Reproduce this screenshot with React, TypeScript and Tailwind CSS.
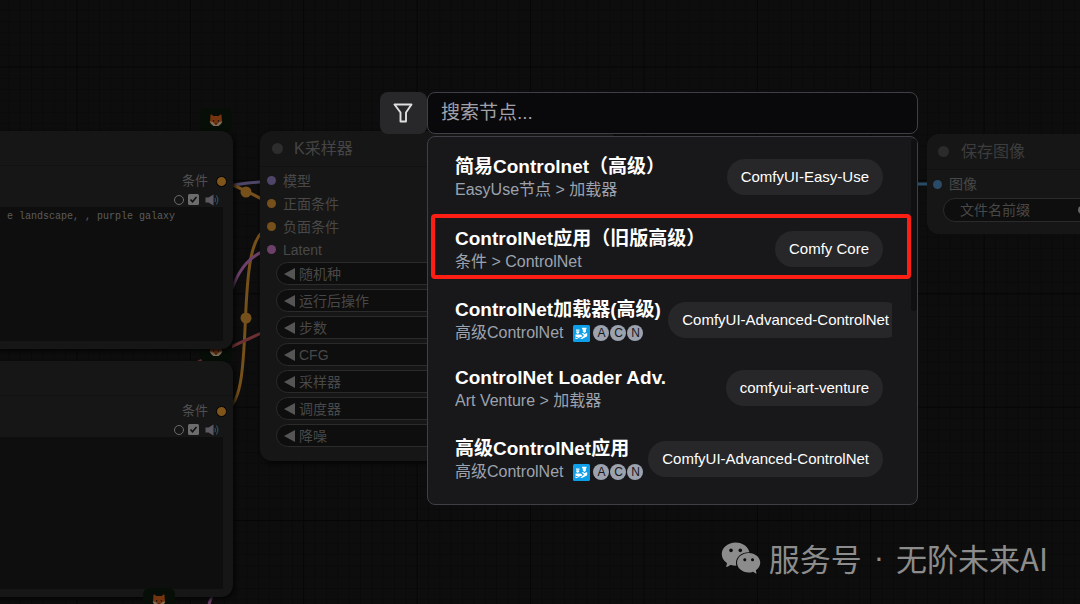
import type { ReactNode } from 'react';
import { AiFillWechat } from 'react-icons/ai';

function Fox({ className }: { className: string }) {
  return (
    <div className={`absolute flex h-6 w-8 items-start justify-center rounded-md bg-[#060e07] pt-1.5 ${className}`}>
      <svg width="14" height="13" viewBox="0 0 14 13" aria-hidden="true">
        <path d="M1.500.8Q2.500 0 4.200 2H9.800Q11.500 0 12.500.8L13 8 7 12 1 8Z" fill="#73340f" />
        <path d="M.6 7.500Q4 7 5.500 10L7 11l1.500-1Q10 7 13.400 7.500 12 11 9.500 12H4.500Q2 11 .6 7.500Z" fill="#7d6f5c" />
        <path d="M4 6h1.200v1.500H4zM8.800 6H10v1.500H8.800zM6 9.500h2L7 11z" fill="#1c1410" />
      </svg>
    </div>
  );
}

function Speaker() {
  return (
    <svg width="14" height="12" viewBox="0 0 14 12" aria-hidden="true">
      <path d="M.5 3.500h3L8.500.5v11L3.500 8.500h-3z" fill="#5c5862" />
      <path d="M9.800 4q1.300 2 0 4M11.300 1.500q3 4.500 0 9" fill="none" stroke="#234a66" strokeWidth="1.300" />
    </svg>
  );
}

function PromptNode({ text, label, className, boxClass }: { text: string; label: string; className: string; boxClass: string }) {
  return (
    <section className={`absolute -left-6 flex w-[257px] flex-col rounded-xl bg-[#161616] pb-2 shadow-[2px_2px_4px_#050505] ${className}`}>
      <div className="h-[35px] border-b border-[#111111]" />
      <div className="flex h-7 items-center justify-end gap-2 pr-1.5 pt-0.5 text-[13px] text-[#505050]">
        条件
        <span className="size-[11px] rounded-full border border-black bg-[#7f551a]" />
      </div>
      <div className="flex h-[13px] items-center justify-end gap-1 pb-0.5 pr-3.5">
        <span className="size-2.5 rounded-full border border-[#6a6a6a]" />
        <svg width="11" height="11" viewBox="0 0 11 11" className="mr-0.5" aria-hidden="true">
          <rect width="11" height="11" rx="1.500" fill="#6c6c6c" />
          <path d="m2.500 5.500 2 2.200 4-4.700" fill="none" stroke="#111" strokeWidth="1.600" />
        </svg>
        <Speaker />
      </div>
      <textarea
        aria-label={label}
        readOnly
        value={text}
        className={`mr-2.5 resize-none overflow-hidden bg-[#0e0e0e] py-0.5 text-right font-[Liberation_Mono,monospace] text-[10px] leading-4 text-[#5c5c5c] outline-none ${boxClass}`}
      />
    </section>
  );
}

const inputs = [
  { name: '模型', dot: 'bg-[#4e4568]' },
  { name: '正面条件', dot: 'bg-[#76501a]' },
  { name: '负面条件', dot: 'bg-[#76501a]' },
  { name: 'Latent', dot: 'bg-[#6d406a]' },
];
const params = ['随机种', '运行后操作', '步数', 'CFG', '采样器', '调度器', '降噪'];

function Sampler() {
  return (
    <section className="absolute left-[260px] top-[131px] w-[357px] rounded-xl bg-[#161616] pb-3.5 text-sm text-[#484848] shadow-[2px_2px_4px_#050505]">
      <header className="flex h-9 items-center gap-[11px] border-b border-[#111111] pl-3 text-base text-[#454545]">
        <span className="size-[11px] rounded-full bg-[#2d2d2d]" />K采样器
      </header>
      <ul className="pt-0.5">
        {inputs.map((i) => (
          <li key={i.name} className="flex h-[23px] items-center gap-[7px] pl-[7px]">
            <span className={`size-[9px] rounded-full ${i.dot}`} />
            {i.name}
          </li>
        ))}
      </ul>
      <div className="mx-4 flex flex-col gap-1 pt-px">
        {params.map((p) => (
          <button key={p} className="flex h-[23px] items-center gap-1 rounded-full border border-[#2b2b2b] bg-[#0e0e0e] pl-1.5">
            <svg width="12" height="12" viewBox="0 0 12 12" aria-hidden="true">
              <path d="M12 0v12L1 6z" fill="#555" />
            </svg>
            {p}
          </button>
        ))}
      </div>
    </section>
  );
}

function SaveNode() {
  return (
    <section className="absolute left-[927px] top-[134px] w-52 rounded-xl bg-[#161616] pb-3 text-sm text-[#484848]">
      <header className="flex h-9 items-center gap-3 border-b border-[#111111] pl-[11px] text-base text-[#3d3d3d]">
        <span className="size-[11px] rounded-full bg-[#2b2b2b]" />保存图像
      </header>
      <div className="flex h-7 items-center gap-[7px] pl-1.5">
        <span className="size-[9px] rounded-full bg-[#294b67]" />图像
      </div>
      <button className="ml-4 flex h-6 w-48 items-center justify-between rounded-full border border-[#2b2b2b] bg-[#0e0e0e] pl-4 pr-12">
        文件名前缀<span className="size-2 shrink-0 rounded-full bg-[#666]" />
      </button>
    </section>
  );
}

function Badges() {
  return (
    <span className="ml-2.5 inline-flex items-center gap-px align-middle">
      <svg width="17" height="17" viewBox="0 0 17 17" className="mr-0.5" aria-hidden="true">
        <rect width="17" height="17" rx="1.500" fill="#0d9fe8" />
        <path d="M3 4.500h3.500v1.200H3zM3.300 6.200h2.900v1.600L4.800 9 3.300 8zM2.500 9.500h5l2 1.500-1 1H6.500v2h-4z" fill="#fff" />
        <path d="M9 2.800h4.500v1.500h-.6v2.500l-1.400 1.200-1.700-1.200V4.300H9zM8.500 8.200h2l1 1 1.500-1h1.200v3L9 14H7l4-3.200z" fill="#fff" />
        <path d="M2.500 12 8 14.500" stroke="#0d9fe8" />
      </svg>
      {['A', 'C', 'N'].map((c) => (
        <span key={c} className="flex size-4 items-center justify-center rounded-full bg-[#9ca3af] text-xs leading-4 text-[#18181b]">
          {c}
        </span>
      ))}
    </span>
  );
}

type Result = { title: string; path: ReactNode; source: string; row: string; tag?: string };
const advanced = <>高级ControlNet<Badges /></>;
const results: Result[] = [
  { title: '简易Controlnet（高级）', path: 'EasyUse节点 > 加载器', source: 'ComfyUI-Easy-Use', row: 'h-[72px]' },
  { title: 'ControlNet应用（旧版高级）', path: '条件 > ControlNet', source: 'Comfy Core', row: 'h-[72px]' },
  { title: 'ControlNet加载器(高级)', path: advanced, source: 'ComfyUI-Advanced-ControlNet', row: 'h-[70px]', tag: '-mr-5' },
  { title: 'ControlNet Loader Adv.', path: 'Art Venture > 加载器', source: 'comfyui-art-venture', row: 'h-[66px]' },
  { title: '高级ControlNet应用', path: advanced, source: 'ComfyUI-Advanced-ControlNet', row: 'h-[76px]' },
];

function SearchDialog() {
  return (
    <div role="dialog" aria-label="搜索节点" className="absolute left-[380px] top-[92px] flex w-[538px] items-start">
      <button aria-label="筛选" className="flex h-[42px] w-[47px] shrink-0 items-center justify-center rounded-lg bg-[#28282a] pr-0.5">
        <svg width="20" height="20" viewBox="0 0 20 20" aria-hidden="true">
          <path d="M1.500 1.500h17L13 9.500V18.500H7.500V9.500z" fill="none" stroke="#dedee2" strokeWidth="1.900" strokeLinejoin="round" />
        </svg>
      </button>
      <div className="flex min-w-0 flex-1 flex-col gap-0.5">
        <input
          aria-label="搜索节点"
          placeholder="搜索节点..."
          className="h-[42px] w-full rounded-lg border border-[#3f3f46] bg-[#09090b] px-[13px] text-[19px] text-white outline-none placeholder:text-[#a1a1aa]"
        />
        <div className="relative rounded-lg border border-[#3f3f46] bg-[#18181a] pb-1.5 pl-[27px] pr-[25px] pt-[5px]">
          <ul className="overflow-hidden pr-[9px]">
            {results.map((r) => (
              <li key={r.title} className={`flex items-center justify-between gap-1 ${r.row}`}>
                <div className="shrink-0 whitespace-nowrap">
                  <div className="text-[19px] font-bold leading-6 text-white">{r.title}</div>
                  <div className="flex h-[22px] items-center whitespace-pre text-base leading-[22px] text-[#9ca3af]">{r.path}</div>
                </div>
                <span className={`mb-0.5 flex h-9 shrink-0 items-center rounded-full bg-[#27272a] px-3.5 text-[15px] text-white ${r.tag ?? ''}`}>
                  {r.source}
                </span>
              </li>
            ))}
          </ul>
          <div className="absolute right-0 top-0.5 h-[172px] w-1.5 rounded-full bg-[#101012]" />
          <div className="absolute left-[3px] right-1.5 top-[77px] h-[65px] rounded border-4 border-[#ff1e14]" />
        </div>
      </div>
    </div>
  );
}

export default function App() {
  return (
    <main className="relative h-screen overflow-hidden bg-[#0d0d0d] font-[Liberation_Sans,Noto_Sans_CJK_SC,sans-serif]">
      <svg className="absolute inset-0 h-full w-full" aria-hidden="true">
        <defs>
          <pattern id="minor" width="11.340" height="11.340" patternUnits="userSpaceOnUse" x="76.500" y="66.500">
            <path d="M.5 0v11.340M0 .5h11.340" stroke="#0a0a0a" />
          </pattern>
          <pattern id="major" width="113.400" height="113.400" patternUnits="userSpaceOnUse" x="76.500" y="66.500">
            <path d="M.5 0v113.400M0 .5h113.400" stroke="#060606" />
          </pattern>
        </defs>
        <rect width="100%" height="100%" fill="url(#minor)" />
        <rect width="100%" height="100%" fill="url(#major)" />
        <g fill="none" strokeWidth="3">
          <path d="M228 186Q244 183 271 181" stroke="#4e4568" />
          <path d="M222 181Q240 187 271 204M222 411C262 408 228 234 271 227" stroke="#76501a" />
          <path d="M200 365C230 330 222 260 271 249M209 604l3-8" stroke="#6d406a" />
          <path d="M198 362L268 330" stroke="#6c3033" />
          <path d="M910 184h28" stroke="#294b67" />
        </g>
        <circle cx="246" cy="192" r="5.500" fill="#76501a" />
        <circle cx="246" cy="318" r="5.500" fill="#76501a" />
      </svg>
      <Fox className="left-[200px] top-[108px]" />
      <Fox className="left-[200px] top-[338px]" />
      <PromptNode label="正面提示词" text="e landscape, , purple galaxy" className="top-[131px]" boxClass="h-[134px] pr-12" />
      <PromptNode label="负面提示词" text="" className="top-[361px]" boxClass="h-[152px]" />
      <Fox className="left-[143px] top-[588px]" />
      <Sampler />
      <SaveNode />
      <SearchDialog />
      <div className="absolute bottom-6 right-8 flex items-center gap-1.5 font-[Liberation_Sans,Noto_Sans_CJK_SC,sans-serif] text-[31px] leading-10 text-[#8c8c8c]">
        <AiFillWechat size={44} aria-hidden="true" />
        <div className="flex gap-3 font-[Noto_Sans_CJK_SC,sans-serif]">
          <span>服务号</span>
          <span className="font-[Liberation_Sans,sans-serif]">·</span>
          <span>无阶未来AI</span>
        </div>
      </div>
    </main>
  );
}
